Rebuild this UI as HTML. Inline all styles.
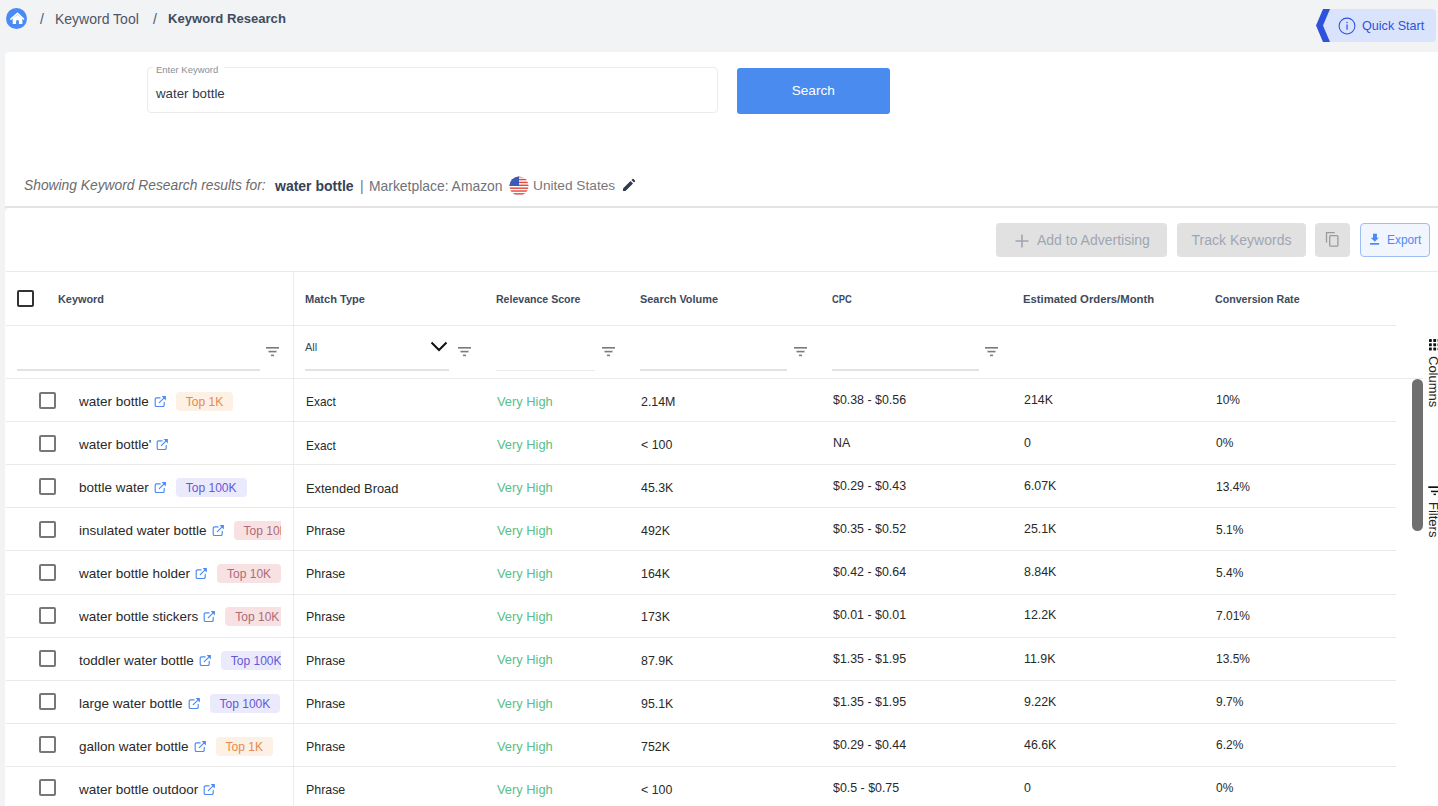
<!DOCTYPE html><html><head><meta charset="utf-8"><style>
*{box-sizing:border-box;margin:0;padding:0}
html,body{width:1438px;height:806px;overflow:hidden;background:#f2f3f5;font-family:"Liberation Sans",sans-serif;color:#222}
.a{position:absolute;white-space:nowrap}
.card{position:absolute;background:#fff}
.hdr{font-weight:bold;font-size:11px;color:#3d4a5c}
.cell{font-size:13px;color:#292929}
.green{color:#58c088}
.cb{position:absolute;width:17px;height:17px;border:2px solid #777;border-radius:2px;background:#fff}
.badge{position:absolute;flex-shrink:0;height:19px;border-radius:4px;font-size:12px;line-height:20.4px;padding:0 10px;white-space:nowrap}
.b1{background:#fdf0e5;color:#e58a4c}
.b10{background:#f7e1e3;color:#ad6b76}
.b100{background:#ebeafd;color:#6159d8}
.hl{position:absolute;height:1px;background:#e9e9e9}
.ul{position:absolute;height:2px;background:#e2e2e2}
.fi{position:absolute}
.ext{position:absolute}
.btn{position:absolute;background:#e1e1e1;border-radius:4px;color:#9fa6b2;font-size:14px;text-align:center}
</style></head><body>
<div class="a" style="left:6px;top:8px;width:21px;height:21px;border-radius:50%;background:#4a8af4"></div>
<svg class="a" style="left:0;top:0" width="32" height="32" viewBox="0 0 32 32"><path d="M10.9 19.2L17.5 13.4L23.6 19" fill="none" stroke="#fff" stroke-width="1.6" stroke-linecap="round" stroke-linejoin="round"/><path d="M12.7 18.6L17.5 14.8L22.4 18.6V23.9H18.9V21.4Q18.9 20 17.5 20Q16.1 20 16.1 21.4V23.9H12.7Z" fill="#fff"/></svg>
<div class="a" style="left:40px;top:11px;font-size:14px;color:#4b5768">/</div>
<div class="a" style="left:55px;top:11px;font-size:14px;color:#4b5768">Keyword Tool</div>
<div class="a" style="left:153px;top:11px;font-size:14px;color:#4b5768">/</div>
<div class="a" style="left:168px;top:11px;font-size:13.1px;font-weight:bold;color:#404c5e">Keyword Research</div>
<div class="a" style="left:1323px;top:9px;width:113px;height:33px;background:#d9e4fc;border-radius:0 4px 4px 0"></div>
<svg class="a" style="left:1315px;top:9px" width="16" height="33" viewBox="0 0 16 33"><path d="M8 0H15L8 16.5L15 33H8L1 16.5Z" fill="#2e52d9"/></svg>
<svg class="a" style="left:1338px;top:17px" width="18" height="18" viewBox="0 0 18 18"><circle cx="9" cy="9" r="7.9" fill="none" stroke="#2e52d9" stroke-width="1.05"/><rect x="8.45" y="7.4" width="1.2" height="5.4" fill="#2e52d9"/><circle cx="9.05" cy="5.4" r="0.75" fill="#2e52d9"/></svg>
<div class="a" style="left:1362px;top:19px;font-size:12.6px;color:#2e52d9">Quick Start</div>
<div class="card" style="left:5px;top:52px;width:1433px;height:155px;border-radius:4px 0 0 0"></div>
<div class="a" style="left:147px;top:67px;width:571px;height:46px;border:1px solid #ebebeb;border-radius:4px;background:#fff"></div>
<div class="a" style="left:153px;top:64px;padding:0 6px 0 3px;background:#fff;font-size:9.5px;color:#8a8f98">Enter Keyword</div>
<div class="a" style="left:156px;top:86px;font-size:13.3px;color:#2f3b4c">water bottle</div>
<div class="a" style="left:736.5px;top:67.5px;width:153.5px;height:46px;background:#4a8bf0;border-radius:3px;color:#fff;font-size:13.6px;text-align:center;line-height:46px">Search</div>

<div class="a" style="left:24px;top:178px;font-size:13.8px;font-style:italic;color:#6b6b6b">Showing Keyword Research results for:</div>
<div class="a" style="left:275px;top:178px;font-size:14px;font-weight:bold;color:#354255">water bottle</div>
<div class="a" style="left:360px;top:178px;font-size:14px;color:#777">|</div>
<div class="a" style="left:369px;top:178px;font-size:13.9px;color:#6f737a">Marketplace: Amazon</div>
<svg class="a" style="left:509px;top:176px" width="20" height="20" viewBox="0 0 20 20"><defs><clipPath id="fc"><circle cx="10" cy="10" r="9.6"/></clipPath></defs><g clip-path="url(#fc)"><rect width="20" height="20" fill="#fff"/><rect y="0.00" width="20" height="1.43" fill="#e0463e"/><rect y="2.86" width="20" height="1.43" fill="#e0463e"/><rect y="5.72" width="20" height="1.43" fill="#e0463e"/><rect y="8.58" width="20" height="1.43" fill="#e0463e"/><rect y="11.44" width="20" height="1.43" fill="#e0463e"/><rect y="14.30" width="20" height="1.43" fill="#e0463e"/><rect y="17.16" width="20" height="1.43" fill="#e0463e"/><rect width="10" height="10" fill="#3b5bb8"/></g></svg>
<div class="a" style="left:533px;top:178px;font-size:13.7px;color:#75787d">United States</div>
<svg class="a" style="left:622px;top:178px" width="14" height="14" viewBox="0 0 14 14"><path d="M1 10.5V13H3.5L11 5.5L8.5 3Z" fill="#2f3b4c"/><path d="M9.5 2L12 4.5L13 3.5C13.3 3.2 13.3 2.8 13 2.5L11.5 1C11.2 .7 10.8 .7 10.5 1Z" fill="#2f3b4c"/></svg>
<div class="a" style="left:5px;top:206px;width:1433px;height:2px;background:#e3e3e3"></div>
<div class="card" style="left:5px;top:208px;width:1433px;height:600px;border-radius:5px 0 0 0"></div>
<div class="btn" style="left:996px;top:223px;width:171px;height:34px"></div>
<svg class="a" style="left:1015px;top:234px" width="14" height="14" viewBox="0 0 14 14"><path d="M7 0.5V13.5M0.5 7H13.5" stroke="#9fa6b2" stroke-width="1.6"/></svg>
<div class="a" style="left:1037px;top:232px;font-size:14px;color:#9fa6b2">Add to Advertising</div>
<div class="btn" style="left:1177px;top:223px;width:129px;height:34px;line-height:34px">Track Keywords</div>
<div class="btn" style="left:1315px;top:223px;width:35px;height:34px"></div>
<svg class="a" style="left:1325px;top:231px" width="15" height="17" viewBox="0 0 15 17"><path d="M1.5 11.6V1.7H9.7" fill="none" stroke="#9b9b9b" stroke-width="1.3"/><rect x="4.7" y="4.6" width="8.2" height="10.6" rx="1" fill="none" stroke="#9b9b9b" stroke-width="1.3"/></svg>
<div class="a" style="left:1360px;top:223px;width:70px;height:34px;border:1px solid #9dbdf5;border-radius:4px;background:#f1f5fe"></div>
<svg class="a" style="left:1369px;top:233px" width="11" height="12" viewBox="0 0 11 12"><rect x="4" y="0.7" width="3.9" height="4.3" fill="#4a8af4"/><path d="M1.8 4.8H9.8L5.85 8.8Z" fill="#4a8af4"/><rect x="1" y="10" width="9.2" height="1.7" fill="#4a8af4"/></svg>
<div class="a" style="left:1387px;top:233px;font-size:11.9px;color:#4a8af4">Export</div>
<div class="hl" style="left:6px;top:271px;width:1432px"></div>
<div class="hl" style="left:6px;top:325px;width:1390px"></div>
<div class="hl" style="left:6px;top:378px;width:1417px"></div>
<div class="a" style="left:293px;top:272px;width:1px;height:534px;background:#ececec"></div>
<div class="a" style="left:17px;top:290px;width:17px;height:17px;border:2px solid #333;border-radius:2px"></div>
<div class="a hdr" style="left:58px;top:293.44px;font-size:10.9px;transform:scaleX(1.0000);transform-origin:0 0">Keyword</div>
<div class="a hdr" style="left:305px;top:293.44px;font-size:10.9px;transform:scaleX(1.0147);transform-origin:0 0">Match Type</div>
<div class="a hdr" style="left:496px;top:293.44px;font-size:10.9px;transform:scaleX(0.9688);transform-origin:0 0">Relevance Score</div>
<div class="a hdr" style="left:640px;top:293.44px;font-size:10.9px;transform:scaleX(1.0009);transform-origin:0 0">Search Volume</div>
<div class="a hdr" style="left:832px;top:293.44px;font-size:10.9px;transform:scaleX(0.8624);transform-origin:0 0">CPC</div>
<div class="a hdr" style="left:1023px;top:293.44px;font-size:10.9px;transform:scaleX(1.0367);transform-origin:0 0">Estimated Orders/Month</div>
<div class="a hdr" style="left:1215px;top:293.44px;font-size:10.9px;transform:scaleX(0.9771);transform-origin:0 0">Conversion Rate</div>
<div class="ul" style="left:17px;top:369px;width:243px"></div>
<div class="fi" style="left:266px;top:347px"><svg class="fi" width="13" height="10" viewBox="0 0 13 10"><rect x="0" y="0" width="13" height="1.6" fill="#7a7a7a"/><rect x="2.5" y="3.8" width="8" height="1.6" fill="#7a7a7a"/><rect x="5" y="7.6" width="3" height="1.6" fill="#7a7a7a"/></svg></div>
<div class="a" style="left:305px;top:341px;font-size:11px;color:#3d4a5c">All</div>
<svg class="a" style="left:430px;top:341px" width="18" height="11" viewBox="0 0 18 11"><path d="M1.5 1.5L9 9L16.5 1.5" fill="none" stroke="#111" stroke-width="2"/></svg>
<div class="ul" style="left:305px;top:369px;width:144px"></div>
<div class="fi" style="left:458px;top:347px"><svg class="fi" width="13" height="10" viewBox="0 0 13 10"><rect x="0" y="0" width="13" height="1.6" fill="#7a7a7a"/><rect x="2.5" y="3.8" width="8" height="1.6" fill="#7a7a7a"/><rect x="5" y="7.6" width="3" height="1.6" fill="#7a7a7a"/></svg></div>
<div class="hl" style="left:496px;top:370px;width:99px"></div>
<div class="fi" style="left:602px;top:347px"><svg class="fi" width="13" height="10" viewBox="0 0 13 10"><rect x="0" y="0" width="13" height="1.6" fill="#7a7a7a"/><rect x="2.5" y="3.8" width="8" height="1.6" fill="#7a7a7a"/><rect x="5" y="7.6" width="3" height="1.6" fill="#7a7a7a"/></svg></div>
<div class="ul" style="left:640px;top:369px;width:147px"></div>
<div class="fi" style="left:794px;top:347px"><svg class="fi" width="13" height="10" viewBox="0 0 13 10"><rect x="0" y="0" width="13" height="1.6" fill="#7a7a7a"/><rect x="2.5" y="3.8" width="8" height="1.6" fill="#7a7a7a"/><rect x="5" y="7.6" width="3" height="1.6" fill="#7a7a7a"/></svg></div>
<div class="ul" style="left:832px;top:369px;width:147px"></div>
<div class="fi" style="left:985px;top:347px"><svg class="fi" width="13" height="10" viewBox="0 0 13 10"><rect x="0" y="0" width="13" height="1.6" fill="#7a7a7a"/><rect x="2.5" y="3.8" width="8" height="1.6" fill="#7a7a7a"/><rect x="5" y="7.6" width="3" height="1.6" fill="#7a7a7a"/></svg></div>
<div class="hl" style="left:6px;top:421px;width:1390px"></div>
<div class="cb" style="left:39px;top:392px"></div>
<div class="a" style="left:79px;top:389px;width:202px;height:24px;overflow:hidden;display:flex;align-items:center"><span style="font-size:13.5px;color:#292929">water bottle</span><span style="position:relative;flex-shrink:0;width:12px;height:12px;margin-left:5px;top:0px"><svg width="12" height="12" viewBox="0 0 12 12" style="position:absolute;left:0;top:0"><path d="M6.1 2.9H2.7Q1.2 2.9 1.2 4.4V10.1Q1.2 11.6 2.7 11.6H8.6Q10.2 11.6 10.2 10.1V7.3" fill="none" stroke="#4a8af4" stroke-width="1.15" stroke-linecap="round"/><path d="M5.3 7.6L10.6 2.3" fill="none" stroke="#4a8af4" stroke-width="1.15" stroke-linecap="round"/><path d="M7.6 1.1H11.9V5.4Z" fill="#4a8af4"/></svg></span><span class="badge b1" style="position:relative;margin-left:10px">Top 1K</span></div>
<div class="a cell" style="left:306px;top:395.43px;font-size:11.9px">Exact</div>
<div class="a cell green" style="left:497px;top:393.87px;font-size:12.85px">Very High</div>
<div class="a cell" style="left:641px;top:394.98px;font-size:12.4px">2.14M</div>
<div class="a cell" style="left:833px;top:392.98px;font-size:12.4px">$0.38 - $0.56</div>
<div class="a cell" style="left:1024px;top:392.98px;font-size:12.4px">214K</div>
<div class="a cell" style="left:1216px;top:393.34px;font-size:12.0px">10%</div>
<div class="hl" style="left:6px;top:464px;width:1390px"></div>
<div class="cb" style="left:39px;top:435px"></div>
<div class="a" style="left:79px;top:432px;width:202px;height:24px;overflow:hidden;display:flex;align-items:center"><span style="font-size:13.5px;color:#292929">water bottle'</span><span style="position:relative;flex-shrink:0;width:12px;height:12px;margin-left:5px;top:0px"><svg width="12" height="12" viewBox="0 0 12 12" style="position:absolute;left:0;top:0"><path d="M6.1 2.9H2.7Q1.2 2.9 1.2 4.4V10.1Q1.2 11.6 2.7 11.6H8.6Q10.2 11.6 10.2 10.1V7.3" fill="none" stroke="#4a8af4" stroke-width="1.15" stroke-linecap="round"/><path d="M5.3 7.6L10.6 2.3" fill="none" stroke="#4a8af4" stroke-width="1.15" stroke-linecap="round"/><path d="M7.6 1.1H11.9V5.4Z" fill="#4a8af4"/></svg></span></div>
<div class="a cell" style="left:306px;top:438.53px;font-size:11.9px">Exact</div>
<div class="a cell green" style="left:497px;top:436.97px;font-size:12.85px">Very High</div>
<div class="a cell" style="left:641px;top:438.08px;font-size:12.4px">< 100</div>
<div class="a cell" style="left:833px;top:436.08px;font-size:12.4px">NA</div>
<div class="a cell" style="left:1024px;top:436.08px;font-size:12.4px">0</div>
<div class="a cell" style="left:1216px;top:436.44px;font-size:12.0px">0%</div>
<div class="hl" style="left:6px;top:507px;width:1390px"></div>
<div class="cb" style="left:39px;top:478px"></div>
<div class="a" style="left:79px;top:475px;width:202px;height:24px;overflow:hidden;display:flex;align-items:center"><span style="font-size:13.5px;color:#292929">bottle water</span><span style="position:relative;flex-shrink:0;width:12px;height:12px;margin-left:5px;top:0px"><svg width="12" height="12" viewBox="0 0 12 12" style="position:absolute;left:0;top:0"><path d="M6.1 2.9H2.7Q1.2 2.9 1.2 4.4V10.1Q1.2 11.6 2.7 11.6H8.6Q10.2 11.6 10.2 10.1V7.3" fill="none" stroke="#4a8af4" stroke-width="1.15" stroke-linecap="round"/><path d="M5.3 7.6L10.6 2.3" fill="none" stroke="#4a8af4" stroke-width="1.15" stroke-linecap="round"/><path d="M7.6 1.1H11.9V5.4Z" fill="#4a8af4"/></svg></span><span class="badge b100" style="position:relative;margin-left:10px">Top 100K</span></div>
<div class="a cell" style="left:306px;top:480.73px;font-size:12.9px">Extended Broad</div>
<div class="a cell green" style="left:497px;top:480.07px;font-size:12.85px">Very High</div>
<div class="a cell" style="left:641px;top:481.18px;font-size:12.4px">45.3K</div>
<div class="a cell" style="left:833px;top:479.18px;font-size:12.4px">$0.29 - $0.43</div>
<div class="a cell" style="left:1024px;top:479.18px;font-size:12.4px">6.07K</div>
<div class="a cell" style="left:1216px;top:479.54px;font-size:12.0px">13.4%</div>
<div class="hl" style="left:6px;top:550px;width:1390px"></div>
<div class="cb" style="left:39px;top:521px"></div>
<div class="a" style="left:79px;top:518px;width:202px;height:24px;overflow:hidden;display:flex;align-items:center"><span style="font-size:13.5px;color:#292929">insulated water bottle</span><span style="position:relative;flex-shrink:0;width:12px;height:12px;margin-left:5px;top:0px"><svg width="12" height="12" viewBox="0 0 12 12" style="position:absolute;left:0;top:0"><path d="M6.1 2.9H2.7Q1.2 2.9 1.2 4.4V10.1Q1.2 11.6 2.7 11.6H8.6Q10.2 11.6 10.2 10.1V7.3" fill="none" stroke="#4a8af4" stroke-width="1.15" stroke-linecap="round"/><path d="M5.3 7.6L10.6 2.3" fill="none" stroke="#4a8af4" stroke-width="1.15" stroke-linecap="round"/><path d="M7.6 1.1H11.9V5.4Z" fill="#4a8af4"/></svg></span><span class="badge b10" style="position:relative;margin-left:10px">Top 10K</span></div>
<div class="a cell" style="left:306px;top:524.28px;font-size:12.4px">Phrase</div>
<div class="a cell green" style="left:497px;top:523.17px;font-size:12.85px">Very High</div>
<div class="a cell" style="left:641px;top:524.28px;font-size:12.4px">492K</div>
<div class="a cell" style="left:833px;top:522.28px;font-size:12.4px">$0.35 - $0.52</div>
<div class="a cell" style="left:1024px;top:522.28px;font-size:12.4px">25.1K</div>
<div class="a cell" style="left:1216px;top:522.64px;font-size:12.0px">5.1%</div>
<div class="hl" style="left:6px;top:594px;width:1390px"></div>
<div class="cb" style="left:39px;top:564px"></div>
<div class="a" style="left:79px;top:561px;width:202px;height:24px;overflow:hidden;display:flex;align-items:center"><span style="font-size:13.5px;color:#292929">water bottle holder</span><span style="position:relative;flex-shrink:0;width:12px;height:12px;margin-left:5px;top:0px"><svg width="12" height="12" viewBox="0 0 12 12" style="position:absolute;left:0;top:0"><path d="M6.1 2.9H2.7Q1.2 2.9 1.2 4.4V10.1Q1.2 11.6 2.7 11.6H8.6Q10.2 11.6 10.2 10.1V7.3" fill="none" stroke="#4a8af4" stroke-width="1.15" stroke-linecap="round"/><path d="M5.3 7.6L10.6 2.3" fill="none" stroke="#4a8af4" stroke-width="1.15" stroke-linecap="round"/><path d="M7.6 1.1H11.9V5.4Z" fill="#4a8af4"/></svg></span><span class="badge b10" style="position:relative;margin-left:10px">Top 10K</span></div>
<div class="a cell" style="left:306px;top:567.38px;font-size:12.4px">Phrase</div>
<div class="a cell green" style="left:497px;top:566.27px;font-size:12.85px">Very High</div>
<div class="a cell" style="left:641px;top:567.38px;font-size:12.4px">164K</div>
<div class="a cell" style="left:833px;top:565.38px;font-size:12.4px">$0.42 - $0.64</div>
<div class="a cell" style="left:1024px;top:565.38px;font-size:12.4px">8.84K</div>
<div class="a cell" style="left:1216px;top:565.74px;font-size:12.0px">5.4%</div>
<div class="hl" style="left:6px;top:637px;width:1390px"></div>
<div class="cb" style="left:39px;top:607px"></div>
<div class="a" style="left:79px;top:604px;width:202px;height:24px;overflow:hidden;display:flex;align-items:center"><span style="font-size:13.5px;color:#292929">water bottle stickers</span><span style="position:relative;flex-shrink:0;width:12px;height:12px;margin-left:5px;top:0px"><svg width="12" height="12" viewBox="0 0 12 12" style="position:absolute;left:0;top:0"><path d="M6.1 2.9H2.7Q1.2 2.9 1.2 4.4V10.1Q1.2 11.6 2.7 11.6H8.6Q10.2 11.6 10.2 10.1V7.3" fill="none" stroke="#4a8af4" stroke-width="1.15" stroke-linecap="round"/><path d="M5.3 7.6L10.6 2.3" fill="none" stroke="#4a8af4" stroke-width="1.15" stroke-linecap="round"/><path d="M7.6 1.1H11.9V5.4Z" fill="#4a8af4"/></svg></span><span class="badge b10" style="position:relative;margin-left:10px">Top 10K</span></div>
<div class="a cell" style="left:306px;top:610.48px;font-size:12.4px">Phrase</div>
<div class="a cell green" style="left:497px;top:609.37px;font-size:12.85px">Very High</div>
<div class="a cell" style="left:641px;top:610.48px;font-size:12.4px">173K</div>
<div class="a cell" style="left:833px;top:608.48px;font-size:12.4px">$0.01 - $0.01</div>
<div class="a cell" style="left:1024px;top:608.48px;font-size:12.4px">12.2K</div>
<div class="a cell" style="left:1216px;top:608.84px;font-size:12.0px">7.01%</div>
<div class="hl" style="left:6px;top:680px;width:1390px"></div>
<div class="cb" style="left:39px;top:650px"></div>
<div class="a" style="left:79px;top:648px;width:202px;height:24px;overflow:hidden;display:flex;align-items:center"><span style="font-size:13.5px;color:#292929">toddler water bottle</span><span style="position:relative;flex-shrink:0;width:12px;height:12px;margin-left:5px;top:0px"><svg width="12" height="12" viewBox="0 0 12 12" style="position:absolute;left:0;top:0"><path d="M6.1 2.9H2.7Q1.2 2.9 1.2 4.4V10.1Q1.2 11.6 2.7 11.6H8.6Q10.2 11.6 10.2 10.1V7.3" fill="none" stroke="#4a8af4" stroke-width="1.15" stroke-linecap="round"/><path d="M5.3 7.6L10.6 2.3" fill="none" stroke="#4a8af4" stroke-width="1.15" stroke-linecap="round"/><path d="M7.6 1.1H11.9V5.4Z" fill="#4a8af4"/></svg></span><span class="badge b100" style="position:relative;margin-left:10px">Top 100K</span></div>
<div class="a cell" style="left:306px;top:653.58px;font-size:12.4px">Phrase</div>
<div class="a cell green" style="left:497px;top:652.47px;font-size:12.85px">Very High</div>
<div class="a cell" style="left:641px;top:653.58px;font-size:12.4px">87.9K</div>
<div class="a cell" style="left:833px;top:651.58px;font-size:12.4px">$1.35 - $1.95</div>
<div class="a cell" style="left:1024px;top:651.58px;font-size:12.4px">11.9K</div>
<div class="a cell" style="left:1216px;top:651.94px;font-size:12.0px">13.5%</div>
<div class="hl" style="left:6px;top:723px;width:1390px"></div>
<div class="cb" style="left:39px;top:693px"></div>
<div class="a" style="left:79px;top:691px;width:202px;height:24px;overflow:hidden;display:flex;align-items:center"><span style="font-size:13.5px;color:#292929">large water bottle</span><span style="position:relative;flex-shrink:0;width:12px;height:12px;margin-left:5px;top:0px"><svg width="12" height="12" viewBox="0 0 12 12" style="position:absolute;left:0;top:0"><path d="M6.1 2.9H2.7Q1.2 2.9 1.2 4.4V10.1Q1.2 11.6 2.7 11.6H8.6Q10.2 11.6 10.2 10.1V7.3" fill="none" stroke="#4a8af4" stroke-width="1.15" stroke-linecap="round"/><path d="M5.3 7.6L10.6 2.3" fill="none" stroke="#4a8af4" stroke-width="1.15" stroke-linecap="round"/><path d="M7.6 1.1H11.9V5.4Z" fill="#4a8af4"/></svg></span><span class="badge b100" style="position:relative;margin-left:10px">Top 100K</span></div>
<div class="a cell" style="left:306px;top:696.68px;font-size:12.4px">Phrase</div>
<div class="a cell green" style="left:497px;top:695.57px;font-size:12.85px">Very High</div>
<div class="a cell" style="left:641px;top:696.68px;font-size:12.4px">95.1K</div>
<div class="a cell" style="left:833px;top:694.68px;font-size:12.4px">$1.35 - $1.95</div>
<div class="a cell" style="left:1024px;top:694.68px;font-size:12.4px">9.22K</div>
<div class="a cell" style="left:1216px;top:695.04px;font-size:12.0px">9.7%</div>
<div class="hl" style="left:6px;top:766px;width:1390px"></div>
<div class="cb" style="left:39px;top:736px"></div>
<div class="a" style="left:79px;top:734px;width:202px;height:24px;overflow:hidden;display:flex;align-items:center"><span style="font-size:13.5px;color:#292929">gallon water bottle</span><span style="position:relative;flex-shrink:0;width:12px;height:12px;margin-left:5px;top:0px"><svg width="12" height="12" viewBox="0 0 12 12" style="position:absolute;left:0;top:0"><path d="M6.1 2.9H2.7Q1.2 2.9 1.2 4.4V10.1Q1.2 11.6 2.7 11.6H8.6Q10.2 11.6 10.2 10.1V7.3" fill="none" stroke="#4a8af4" stroke-width="1.15" stroke-linecap="round"/><path d="M5.3 7.6L10.6 2.3" fill="none" stroke="#4a8af4" stroke-width="1.15" stroke-linecap="round"/><path d="M7.6 1.1H11.9V5.4Z" fill="#4a8af4"/></svg></span><span class="badge b1" style="position:relative;margin-left:10px">Top 1K</span></div>
<div class="a cell" style="left:306px;top:739.78px;font-size:12.4px">Phrase</div>
<div class="a cell green" style="left:497px;top:738.67px;font-size:12.85px">Very High</div>
<div class="a cell" style="left:641px;top:739.78px;font-size:12.4px">752K</div>
<div class="a cell" style="left:833px;top:737.78px;font-size:12.4px">$0.29 - $0.44</div>
<div class="a cell" style="left:1024px;top:737.78px;font-size:12.4px">46.6K</div>
<div class="a cell" style="left:1216px;top:738.14px;font-size:12.0px">6.2%</div>
<div class="hl" style="left:6px;top:809px;width:1390px"></div>
<div class="cb" style="left:39px;top:779px"></div>
<div class="a" style="left:79px;top:777px;width:202px;height:24px;overflow:hidden;display:flex;align-items:center"><span style="font-size:13.5px;color:#292929">water bottle outdoor</span><span style="position:relative;flex-shrink:0;width:12px;height:12px;margin-left:5px;top:0px"><svg width="12" height="12" viewBox="0 0 12 12" style="position:absolute;left:0;top:0"><path d="M6.1 2.9H2.7Q1.2 2.9 1.2 4.4V10.1Q1.2 11.6 2.7 11.6H8.6Q10.2 11.6 10.2 10.1V7.3" fill="none" stroke="#4a8af4" stroke-width="1.15" stroke-linecap="round"/><path d="M5.3 7.6L10.6 2.3" fill="none" stroke="#4a8af4" stroke-width="1.15" stroke-linecap="round"/><path d="M7.6 1.1H11.9V5.4Z" fill="#4a8af4"/></svg></span></div>
<div class="a cell" style="left:306px;top:782.88px;font-size:12.4px">Phrase</div>
<div class="a cell green" style="left:497px;top:781.77px;font-size:12.85px">Very High</div>
<div class="a cell" style="left:641px;top:782.88px;font-size:12.4px">< 100</div>
<div class="a cell" style="left:833px;top:780.88px;font-size:12.4px">$0.5 - $0.75</div>
<div class="a cell" style="left:1024px;top:780.88px;font-size:12.4px">0</div>
<div class="a cell" style="left:1216px;top:781.24px;font-size:12.0px">0%</div>
<div class="a" style="left:1412px;top:379px;width:11px;height:152px;border-radius:5.5px;background:#6f6f6f"></div>
<svg class="a" style="left:1429px;top:338.8px" width="12" height="13" viewBox="0 0 12 13"><rect x="0.00" y="0.00" width="2.8" height="2.9" rx="0.4" fill="#111"/><rect x="4.30" y="0.00" width="2.8" height="2.9" rx="0.4" fill="#111"/><rect x="8.60" y="0.00" width="2.8" height="2.9" rx="0.4" fill="#111"/><rect x="0.00" y="4.25" width="2.8" height="2.9" rx="0.4" fill="#111"/><rect x="4.30" y="4.25" width="2.8" height="2.9" rx="0.4" fill="#111"/><rect x="8.60" y="4.25" width="2.8" height="2.9" rx="0.4" fill="#111"/><rect x="0.00" y="8.50" width="2.8" height="2.9" rx="0.4" fill="#111"/><rect x="4.30" y="8.50" width="2.8" height="2.9" rx="0.4" fill="#111"/><rect x="8.60" y="8.50" width="2.8" height="2.9" rx="0.4" fill="#111"/></svg>
<div class="a" style="left:1425px;top:356px;width:16px;height:52px;font-size:13px;color:#222;writing-mode:vertical-rl;line-height:16px">Columns</div>
<svg class="a" style="left:1428px;top:486px" width="10" height="10" viewBox="0 0 10 10"><rect x="0.3" y="0.3" width="10" height="1.7" fill="#111"/><rect x="3" y="4.7" width="7" height="1.5" fill="#111"/><rect x="5.5" y="7.7" width="2.5" height="1.4" fill="#111"/></svg>
<div class="a" style="left:1425px;top:502px;width:16px;height:40px;font-size:13px;color:#222;writing-mode:vertical-rl;line-height:16px">Filters</div>
</body></html>
